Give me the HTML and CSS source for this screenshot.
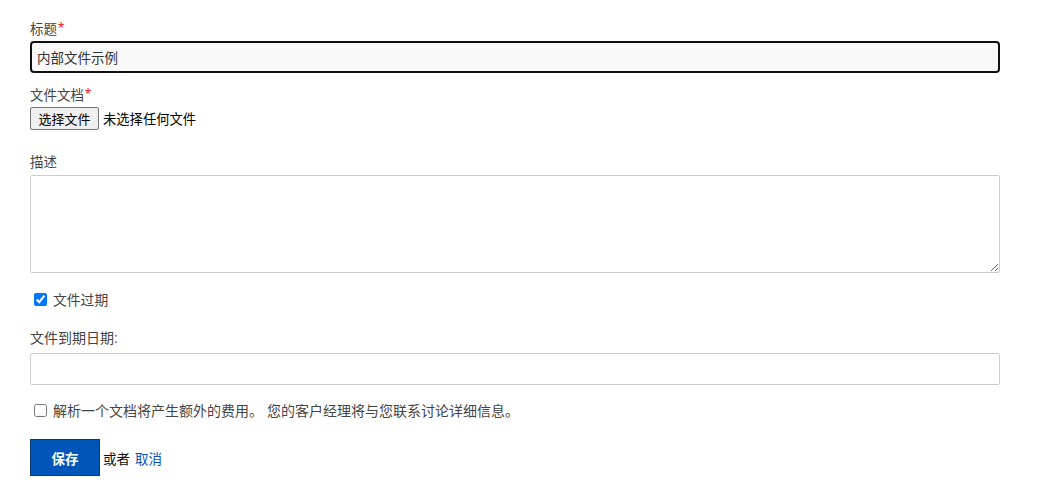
FILE: index.html
```html
<!DOCTYPE html>
<html lang="zh-CN">
<head>
    <meta charset="UTF-8">
    <meta name="viewport" content="width=device-width, initial-scale=1.0">
    <title>文件文档</title>
    <link rel="stylesheet" href="styles.css">
</head>
<body>
    <form class="doc-form">
        <div class="field field-title">
            <label class="field-label">标题<span class="req">*</span></label>
            <input type="text" class="text-input focused" value="内部文件示例">
        </div>

        <div class="field field-file">
            <label class="field-label">文件文档<span class="req">*</span></label>
            <div class="file-row">
                <button type="button" class="file-btn">选择文件</button>
                <span class="file-name">未选择任何文件</span>
            </div>
        </div>

        <div class="field field-desc">
            <label class="field-label">描述</label>
            <textarea class="text-area"></textarea>
        </div>

        <label class="check-row check-expire">
            <input type="checkbox" checked>
            <span>文件过期</span>
        </label>

        <div class="field field-date">
            <label class="field-label">文件到期日期:</label>
            <input type="text" class="text-input">
        </div>

        <label class="check-row check-parse">
            <input type="checkbox">
            <span>解析一个文档将产生额外的费用。 您的客户经理将与您联系讨论详细信息。</span>
        </label>

        <div class="actions">
            <button type="button" class="save-btn">保存</button>
            <span class="or">或者</span>
            <a href="#" class="cancel">取消</a>
        </div>
    </form>
</body>
</html>
```

FILE: styles.css
```css
body { margin: 0; background: #fff; font-family: "Liberation Sans", "Noto Sans CJK SC", sans-serif; font-size: 13px; color: #333; }
.doc-form { width: 970px; padding: 21px 0 0 30px; }
.field-label { display: block; line-height: 18px; font-size: 13.5px; color: #444; }
.req { color: #e8262d; margin-left: 1px; font-size: 16px; line-height: 0; }

.field-title { margin-bottom: 14px; }
.field-title .field-label { margin-bottom: 2px; }
.text-input { display: block; box-sizing: border-box; width: 100%; height: 32px; margin: 0; padding: 0 6px; border: 1px solid #ccc; border-radius: 2px; background: #fff; font: inherit; color: #333; }
.text-input.focused { border: 2px solid #111; border-radius: 4px; background: #f9f9f9; padding-left: 5px; outline: none; font-size: 13.5px; }

.field-file { margin-bottom: 24px; }
.file-row { display: flex; align-items: center; margin-top: 2px; }
.file-btn { box-sizing: border-box; height: 23px; width: 69px; padding: 0; margin: 0 4px 0 0; border: 1px solid #767676; border-radius: 2px; background: #efefef; font: inherit; color: #000; }
.file-name { color: #000; font-size: 13.3px; }

.field-desc { margin-bottom: 17px; }
.field-desc .field-label { margin-bottom: 3px; }
.text-area { display: block; box-sizing: border-box; width: 100%; height: 98px; margin: 0; border: 1px solid #ccc; border-radius: 2px; font: inherit; }

.check-row { display: flex; align-items: center; height: 18px; padding-left: 4px; font-size: 13.8px; color: #444; }
.check-row input { width: 13px; height: 13px; margin: 0 6px 0 0; accent-color: #0075ff; }
.check-expire { margin-bottom: 21px; }

.field-date { margin-bottom: 16px; }
.field-date .field-label { margin-bottom: 6px; font-size: 14px; }

.check-parse { margin-bottom: 20px; font-size: 14px; }

.actions { display: flex; align-items: center; font-size: 13.5px; }
.save-btn { box-sizing: border-box; width: 70px; height: 37px; margin: 0 3px 0 0; border: 1px solid #0b3a76; background: #0056b8; color: #fff; font: inherit; font-weight: bold; }
.or { color: #111; margin-right: 5px; }
.cancel { color: #0b4fb3; text-decoration: none; }
```
